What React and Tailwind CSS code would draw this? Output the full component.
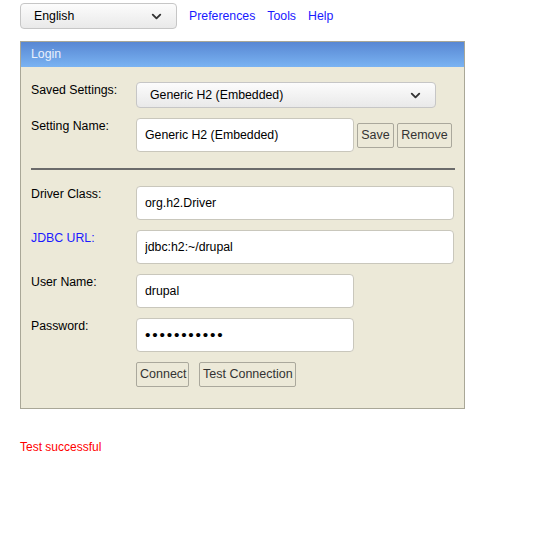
import { ChevronDown } from 'lucide-react';

const inputCls =
  'box-border h-[34px] rounded-[4px] border border-[#c9c7bc] bg-white pl-[8px] text-[12.3px] text-black outline-none';

function FakeSelect({ value, className }) {
  return (
    <div
      className={`box-border flex items-center justify-between rounded-[4px] border border-[#c6c6c6] bg-gradient-to-b from-[#fcfcfc] to-[#e9e9e9] pl-[13px] pr-[12px] text-[12.3px] text-black ${className}`}
    >
      <span>{value}</span>
      <ChevronDown size={15} strokeWidth={3} className="text-[#333]" />
    </div>
  );
}

function Btn({ children, className = '' }) {
  return (
    <button
      className={`box-border h-[25px] whitespace-nowrap rounded-[2px] border border-[#aaa89c] bg-[#ece9d8] px-[3px] text-[12.5px] text-[#333] ${className}`}
    >
      {children}
    </button>
  );
}

function Row({ label, labelClass = 'text-black', children, labelPad = 'pt-0' }) {
  return (
    <div className="flex items-start">
      <div className={`w-[105px] shrink-0 leading-[15px] ${labelPad} ${labelClass}`}>{label}</div>
      {children}
    </div>
  );
}

export default function App() {
  return (
    <div className="min-h-[534px] bg-white text-[12.3px] [font-family:'Liberation_Sans',Arial,sans-serif]">
      <div className="flex items-center pl-[20px] pt-[3px]">
        <FakeSelect value="English" className="h-[26px] w-[157px]" />
        <div className="ml-[12px] flex gap-[12px] text-[#1a1aff]">
          <a>Preferences</a>
          <a>Tools</a>
          <a>Help</a>
        </div>
      </div>

      <div className="ml-[20px] mt-[12px] w-[445px] border border-[#a9a797] bg-[#ece9d8]">
        <div className="flex h-[25px] items-center bg-gradient-to-b from-[#5887d3] to-[#7ab3f2] pl-[10px] text-[#e9f0fc]">
          Login
        </div>

        <div className="flex flex-col px-[10px] pb-[21px] pt-[15px]">
          <Row label="Saved Settings:" labelPad="pt-[1px]">
            <FakeSelect value="Generic H2 (Embedded)" className="h-[26px] w-[300px]" />
          </Row>

          <div className="mt-[10px]">
            <Row label="Setting Name:" labelPad="pt-[1px]">
              <div className="flex items-center">
                <input readOnly value="Generic H2 (Embedded)" className={`${inputCls} w-[218px]`} />
                <Btn className="ml-[3px] w-[37px]">Save</Btn>
                <Btn className="ml-[3px] w-[55px]">Remove</Btn>
              </div>
            </Row>
          </div>

          <div className="mt-[16px] h-[2px] w-[424px] bg-[#6b6b6b]" />

          <div className="mt-[16px] flex flex-col gap-[10px]">
            <Row label="Driver Class:" labelPad="pt-[1px]">
              <input readOnly value="org.h2.Driver" className={`${inputCls} w-[318px]`} />
            </Row>
            <Row label="JDBC URL:" labelClass="text-[#1a1aff]" labelPad="pt-[1px]">
              <input readOnly value="jdbc:h2:~/drupal" className={`${inputCls} w-[318px]`} />
            </Row>
            <Row label="User Name:" labelPad="pt-[1px]">
              <input readOnly value="drupal" className={`${inputCls} w-[218px]`} />
            </Row>
            <Row label="Password:" labelPad="pt-[1px]">
              <input
                readOnly
                type="password"
                value="xxxxxxxxxxx"
                className={`${inputCls} w-[218px] text-[15.5px] tracking-[1.8px]`}
              />
            </Row>
            <div className="flex pl-[105px]">
              <Btn className="w-[53px]">Connect</Btn>
              <Btn className="ml-[10px] w-[97px]">Test Connection</Btn>
            </div>
          </div>
        </div>
      </div>

      <div className="ml-[20px] mt-[29px] text-[12px] text-[#ff0000]">Test successful</div>
    </div>
  );
}
